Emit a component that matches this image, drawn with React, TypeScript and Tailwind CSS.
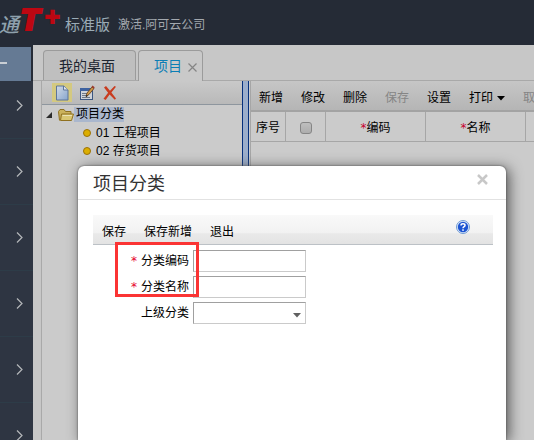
import React from "react";

const menuRows = [0, 1, 2, 3, 4, 5];

const gridActions = [
  { label: "新增" },
  { label: "修改" },
  { label: "删除" },
  { label: "保存", disabled: true },
  { label: "设置" },
  { label: "打印", menu: true },
  { label: "取", disabled: true },
];

const treeItems = ["01 工程项目", "02 存货项目"];

function NewIcon() {
  return (
    <svg width="14" height="16" viewBox="0 0 14 16">
      <defs>
        <linearGradient id="page" x1="0" y1="0" x2="1" y2="1">
          <stop offset="0" stopColor="#d3dbe6" />
          <stop offset="1" stopColor="#86a5ce" />
        </linearGradient>
      </defs>
      <path d="M1.5 1h7.500l4 4v10h-11.500z" fill="url(#page)" stroke="#5d759b" />
      <path d="M8.500 1v4h4.500" fill="#dfe4ea" stroke="#5d759b" />
    </svg>
  );
}

function EditIcon() {
  return (
    <svg width="16" height="16" viewBox="0 0 16 16">
      <rect x="1.500" y="3.500" width="12" height="11" fill="#cfd3d9" stroke="#3c5680" />
      <rect x="1" y="3" width="13" height="3" fill="#3e62a0" />
      <path d="M3 8.500h7M3 10.500h5M3 12.500h8" stroke="#6f7987" />
      <path d="M7 11.500l1-3.500 5-6 2 1.500-5 6z" fill="#d09a48" stroke="#5c3a1c" strokeWidth="0.800" />
      <path d="M12.500 2l1-1.500 2.200 1.700-1 1.500z" fill="#9c3a2c" />
      <path d="M7 12l.4-2 1.400 1z" fill="#222" />
    </svg>
  );
}

function DeleteIcon() {
  return (
    <svg width="14" height="16" viewBox="0 0 14 16">
      <path d="M1 2.500l2-1.500 4 4.800L11.500 1l1.500.8-4.600 5.700 4.600 6-1.200 1.200-5.200-5.200-4 5.500L.5 13.800l4.600-6z" fill="#c93c1f" />
    </svg>
  );
}

function FolderIcon() {
  return (
    <svg width="16" height="14" viewBox="0 0 16 14" className="shrink-0">
      <path d="M1.500 12.500l-1-9 1.500-2h4l1.500 2h5.500v3" fill="#cbb25c" stroke="#8f7020" />
      <path d="M2.500 12.500L3.500 6h12l-2 6.500z" fill="#d9c672" stroke="#8f7020" />
      <path d="M4.500 7.500h9.500" stroke="#ece3b4" />
    </svg>
  );
}

function HelpIcon() {
  return (
    <svg width="14" height="14" viewBox="0 0 14 14">
      <circle cx="7" cy="7" r="6.500" fill="#dfe9f7" stroke="#6f9bd6" />
      <circle cx="7" cy="7" r="5.200" fill="#1d55d2" />
      <path d="M5 5.500c0-2.200 4-2.200 4 0C9 6.800 7 6.700 7 8.300" fill="none" stroke="#fff" strokeWidth="1.500" />
      <rect x="6.200" y="9.300" width="1.600" height="1.500" fill="#fff" />
    </svg>
  );
}

function Header() {
  return (
    <header className="flex h-[45px] shrink-0 items-start bg-[#252b36]">
      <div className="flex h-[45px] w-[65px] shrink-0 items-start">
        <span className="-ml-px mt-[11px] w-[22px] text-xl leading-[28px] font-medium text-[#8fa1ad] italic">通</span>
        <span className="mt-[7px] w-[26px] font-['DejaVu_Sans',sans-serif] text-[28px] leading-[28px] font-bold text-[#bd0712] italic [-webkit-text-stroke:2px_#bd0712]">T</span>
        <span className="mt-[6px] -ml-[3px] font-['DejaVu_Sans',sans-serif] text-[20px] leading-[20px] font-bold text-[#bd0712] italic [-webkit-text-stroke:2px_#bd0712]">+</span>
      </div>
      <span className="mt-[15px] text-[15px] leading-5 text-[#9aabb6]">标准版</span>
      <span className="mt-[15px] ml-2 text-xs leading-5 text-[#a3a8ae]">激活.阿可云公司</span>
    </header>
  );
}

function Sidebar() {
  return (
    <nav className="w-[33px] shrink-0 overflow-hidden bg-[#2e3542]">
      <div className="h-[36px] border-t-2 border-r-2 border-[#252b36] bg-[#657a94]">
        <button aria-label="收起" className="flex h-[32px] items-center">
          <span className="block h-[2px] w-[7px] bg-[#c9ced4]" />
        </button>
      </div>
      <div className="-mt-2">
        {menuRows.map((row) => (
          <button key={row} aria-label="展开" className="flex h-[66px] w-full items-center justify-end border-b border-[#2d3c48] pr-[10px]">
            <svg width="7" height="11" viewBox="0 0 7 11">
              <path d="M1 .5l5 5-5 5" fill="none" stroke="#b4b7ba" strokeWidth="1.200" />
            </svg>
          </button>
        ))}
      </div>
    </nav>
  );
}

function Tabs() {
  return (
    <div className="flex h-[36px] shrink-0 items-end gap-[2px] border-b border-[#a9a9a9] pl-[10px]">
      <button className="h-[30px] w-[93px] rounded-t border border-b-0 border-[#9b9b9b] bg-[#bfbfbf] pr-[5px] text-sm text-[#1d2530]">我的桌面</button>
      <div className="-mb-px flex h-[31px] w-[65px] items-center rounded-t border border-b-0 border-[#9b9b9b] bg-[#c9c9c9] pl-[15px]">
        <button className="text-sm text-[#0b7eb5]">项目</button>
        <button aria-label="关闭标签" className="ml-[6px] pt-[2px]">
          <svg width="9" height="9" viewBox="0 0 9 9">
            <path d="M.5.5l8 8m0-8l-8 8" stroke="#858585" strokeWidth="1.200" />
          </svg>
        </button>
      </div>
    </div>
  );
}

function TreePanel() {
  return (
    <section className="w-[200px] shrink-0">
      <div className="flex h-[24px] items-center border-b border-[#8e969e] bg-linear-to-b from-[#c9c9c9] to-[#b9b9b9] pl-[10px]">
        <button aria-label="新建" className="flex h-[19px] w-[20px] items-center justify-center bg-[#d4c980]"><NewIcon /></button>
        <button aria-label="编辑" className="ml-[7px]"><EditIcon /></button>
        <button aria-label="删除" className="ml-[8px]"><DeleteIcon /></button>
      </div>
      <div className="flex h-[19px] items-center pl-1">
        <svg width="6" height="6" viewBox="0 0 6 6" className="mr-[6px]">
          <path d="M6 0v6H0z" fill="#2c2c2c" />
        </svg>
        <FolderIcon />
        <span className="h-[15px] bg-[#aab7cd] pl-[2px] text-xs leading-[15px]">项目分类</span>
      </div>
      <ul>
        {treeItems.map((item) => (
          <li key={item} className="flex h-[18px] items-center pl-[41px] text-xs">
            <span className="mr-[5px] size-[8px] rounded-full border border-[#9b7208] bg-[#dcae00]" />
            {item}
          </li>
        ))}
      </ul>
    </section>
  );
}

function GridPanel() {
  const cell = "h-[30px] border-r border-b border-[#a6a6a6] p-0 pt-[2px] font-normal";
  return (
    <section className="ml-[1px] min-w-0 flex-1 overflow-hidden border-l border-[#a6a6a6]">
      <div className="flex h-[31px] items-center gap-[18px] overflow-hidden border-b-2 border-[#a3a3a3] bg-linear-to-b from-[#c6c6c6] to-[#b5b5b5] pt-[5px] pl-2">
        {gridActions.map((action) => (
          <button key={action.label} disabled={action.disabled} className="flex shrink-0 items-center gap-1 text-xs disabled:text-[#858585]">
            {action.label}
            {action.menu && (
              <svg width="8" height="5" viewBox="0 0 8 5"><path d="M0 0h8L4 4.500z" fill="#000" /></svg>
            )}
          </button>
        ))}
      </div>
      <table className="w-[375px] table-fixed border-separate border-spacing-0 text-xs">
        <thead>
          <tr>
            <th className={cell + " w-[35px]"}>序号</th>
            <th className={cell + " w-[40px]"}>
              <input type="checkbox" aria-label="全选" className="mx-auto block size-[12px] appearance-none rounded-[3px] border border-[#858585] bg-linear-to-b from-[#bebebe] to-[#adadad]" />
            </th>
            <th className={cell + " w-[100px]"}><span className="font-['DejaVu_Sans',sans-serif] text-[#c8002c]">*</span>编码</th>
            <th className={cell + " w-[100px]"}><span className="font-['DejaVu_Sans',sans-serif] text-[#c8002c]">*</span>名称</th>
            <th className={cell} />
          </tr>
        </thead>
      </table>
    </section>
  );
}

function FieldLabel({ id, text, required }: { id: string; text: string; required?: boolean }) {
  return (
    <label htmlFor={id} className="w-[96px] text-right text-xs">
      {required && <span className="mr-1 font-['DejaVu_Sans',sans-serif] text-[#e6002d]">*</span>}
      {text}
    </label>
  );
}

function CategoryDialog() {
  const field = "h-[22px] w-[113px] border border-[#cacaca] border-t-[#a0a0a0] border-l-[#a0a0a0] bg-white px-1 text-xs outline-none";
  return (
    <div className="absolute inset-0 overflow-hidden pt-[166px] pr-[28px] pl-[78px]">
      <div role="dialog" aria-labelledby="dialog-title" className="h-full rounded-t-md bg-white shadow-[0_0_2px_#444,3px_2px_14px_#555]">
        <div className="flex h-[34px] items-center border-b border-[#e2e2e2] pr-[18px] pl-[15px]">
          <h1 id="dialog-title" className="flex-1 pt-[2px] text-lg leading-6 text-[#333]">项目分类</h1>
          <button aria-label="关闭" className="mb-[6px]">
            <svg width="11" height="11" viewBox="0 0 11 11">
              <path d="M1 1l9 9m0-9l-9 9" stroke="#c8c8c8" strokeWidth="2.500" />
            </svg>
          </button>
        </div>
        <div className="pt-[15px] pr-[13px] pl-[15px]">
          <div className="flex h-[30px] items-center gap-[18px] border-b border-[#bcc1c6] bg-[linear-gradient(#f9f9f9,#f2f2f2_60%,#e9e9e9_65%,#e3e3e3)] pr-[23px] pl-[9px] text-xs">
            <button className="pt-[5px]">保存</button>
            <button className="pt-[5px]">保存新增</button>
            <button className="pt-[5px]">退出</button>
            <button aria-label="帮助" className="mb-[5px] ml-auto"><HelpIcon /></button>
          </div>
          <form className="relative flex flex-col gap-1 pt-[5px]">
            <div className="flex items-center gap-1">
              <FieldLabel id="code" text="分类编码" required />
              <input id="code" className={field} />
            </div>
            <div className="flex items-center gap-1">
              <FieldLabel id="name" text="分类名称" required />
              <input id="name" className={field} />
            </div>
            <div className="flex items-center gap-1">
              <FieldLabel id="parent" text="上级分类" />
              <div className="relative">
                <select id="parent" className={field + " block appearance-none"}>
                  <option value=""></option>
                </select>
                <svg width="8" height="5" viewBox="0 0 8 5" className="pointer-events-none absolute top-[11px] right-[5px]">
                  <path d="M0 0h8L4 4.500z" fill="#606060" />
                </svg>
              </div>
            </div>
            <div className="pointer-events-none absolute -top-[3px] left-[22px] h-[55px] w-[84px] border-3 border-[#fb3434]" />
          </form>
        </div>
      </div>
    </div>
  );
}

export default function App() {
  return (
    <div className="relative flex h-screen flex-col overflow-hidden bg-[#c7c7c7] font-['Liberation_Sans','Noto_Sans_CJK_SC',sans-serif] text-black">
      <Header />
      <div className="flex min-h-0 flex-1">
        <Sidebar />
        <main className="flex min-w-0 flex-1 flex-col">
          <Tabs />
          <div className="ml-[8px] flex min-h-0 flex-1 border-l border-[#a9a9a9] bg-[#cbcbcb]">
            <TreePanel />
            <div className="w-[7px] shrink-0 border-x border-[#06307c] bg-[#9caecb]" />
            <GridPanel />
          </div>
        </main>
      </div>
      <CategoryDialog />
    </div>
  );
}
